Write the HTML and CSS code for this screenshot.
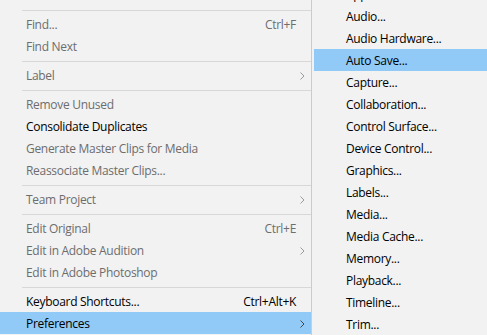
FILE: index.html
```html
<!DOCTYPE html>
<html lang="en">
<head>
  <meta charset="UTF-8" />
  <title>Edit Menu</title>
  <link rel="stylesheet" href="styles.css">
</head>
<body>
  <div class="screen">
    <ul class="menu">
      <li class="sep"></li>
      <li class="item off"><span class="label">Find...</span><span class="key">Ctrl+F</span><span class="arrow"></span></li>
      <li class="item off"><span class="label">Find Next</span><span class="key"></span><span class="arrow"></span></li>
      <li class="sep"></li>
      <li class="item off"><span class="label">Label</span><span class="key"></span><span class="arrow"><svg width="5" height="8" viewBox="0 0 5 8"><polyline points="0.5,0.5 4,4 0.5,7.5" /></svg></span></li>
      <li class="sep"></li>
      <li class="item off"><span class="label">Remove Unused</span><span class="key"></span><span class="arrow"></span></li>
      <li class="item"><span class="label">Consolidate Duplicates</span><span class="key"></span><span class="arrow"></span></li>
      <li class="item off"><span class="label">Generate Master Clips for Media</span><span class="key"></span><span class="arrow"></span></li>
      <li class="item off"><span class="label">Reassociate Master Clips...</span><span class="key"></span><span class="arrow"></span></li>
      <li class="sep"></li>
      <li class="item off"><span class="label">Team Project</span><span class="key"></span><span class="arrow"><svg width="5" height="8" viewBox="0 0 5 8"><polyline points="0.5,0.5 4,4 0.5,7.5" /></svg></span></li>
      <li class="sep"></li>
      <li class="item off"><span class="label">Edit Original</span><span class="key">Ctrl+E</span><span class="arrow"></span></li>
      <li class="item off"><span class="label">Edit in Adobe Audition</span><span class="key"></span><span class="arrow"><svg width="5" height="8" viewBox="0 0 5 8"><polyline points="0.5,0.5 4,4 0.5,7.5" /></svg></span></li>
      <li class="item off"><span class="label">Edit in Adobe Photoshop</span><span class="key"></span><span class="arrow"></span></li>
      <li class="sep"></li>
      <li class="item"><span class="label">Keyboard Shortcuts...</span><span class="key">Ctrl+Alt+K</span><span class="arrow"></span></li>
      <li class="item active"><span class="label">Preferences</span><span class="key"></span><span class="arrow"><svg width="5" height="8" viewBox="0 0 5 8"><polyline points="0.5,0.5 4,4 0.5,7.5" /></svg></span></li>
    </ul>

    <ul class="submenu">
      <li class="sub-item">Appearance...</li>
      <li class="sub-item">Audio...</li>
      <li class="sub-item">Audio Hardware...</li>
      <li class="sub-item active">Auto Save...</li>
      <li class="sub-item">Capture...</li>
      <li class="sub-item">Collaboration...</li>
      <li class="sub-item">Control Surface...</li>
      <li class="sub-item">Device Control...</li>
      <li class="sub-item">Graphics...</li>
      <li class="sub-item">Labels...</li>
      <li class="sub-item">Media...</li>
      <li class="sub-item">Media Cache...</li>
      <li class="sub-item">Memory...</li>
      <li class="sub-item">Playback...</li>
      <li class="sub-item">Timeline...</li>
      <li class="sub-item">Trim...</li>
    </ul>
  </div>
</body>
</html>
```

FILE: styles.css
```css
* {
  box-sizing: border-box;
  margin: 0;
  padding: 0;
}

body {
  font-family: 'Open Sans', 'Noto Sans', sans-serif;
  font-size: 12px;
  letter-spacing: -0.3px;
  background: #f2f2f2;
  color: #000;
  width: 487px;
  height: 335px;
  overflow: hidden;
}

.screen {
  display: flex;
  height: 335px;
  overflow: hidden;
}

ul {
  list-style: none;
}

.menu {
  width: 311px;
  flex-shrink: 0;
  padding-top: 6px;
}

.sep {
  height: 7px;
  padding-top: 4px;
  margin-left: 22px;
}

.sep::before {
  content: '';
  display: block;
  height: 1px;
  background: #d7d7d7;
}

.item {
  display: flex;
  align-items: center;
  height: 22px;
  padding-left: 26px;
  padding-top: 1px;
  white-space: nowrap;
}

.item .label {
  flex: 1;
}

.item .key {
  text-align: right;
}

.item .arrow {
  width: 15px;
  display: flex;
  align-items: center;
  padding-left: 4px;
}

.arrow polyline {
  fill: none;
  stroke: #444;
  stroke-width: 1;
}

.item.off {
  color: #6d6d6d;
}

.item.off .arrow polyline {
  stroke: #9a9a9a;
}

.item.active,
.sub-item.active {
  background: #91c9f7;
}

.submenu {
  flex: 1;
  border-left: 1px solid #cccccc;
  padding-left: 2px;
  margin-top: -17px;
}

.sub-item {
  height: 22px;
  line-height: 23px;
  padding-left: 32px;
  white-space: nowrap;
}
```
